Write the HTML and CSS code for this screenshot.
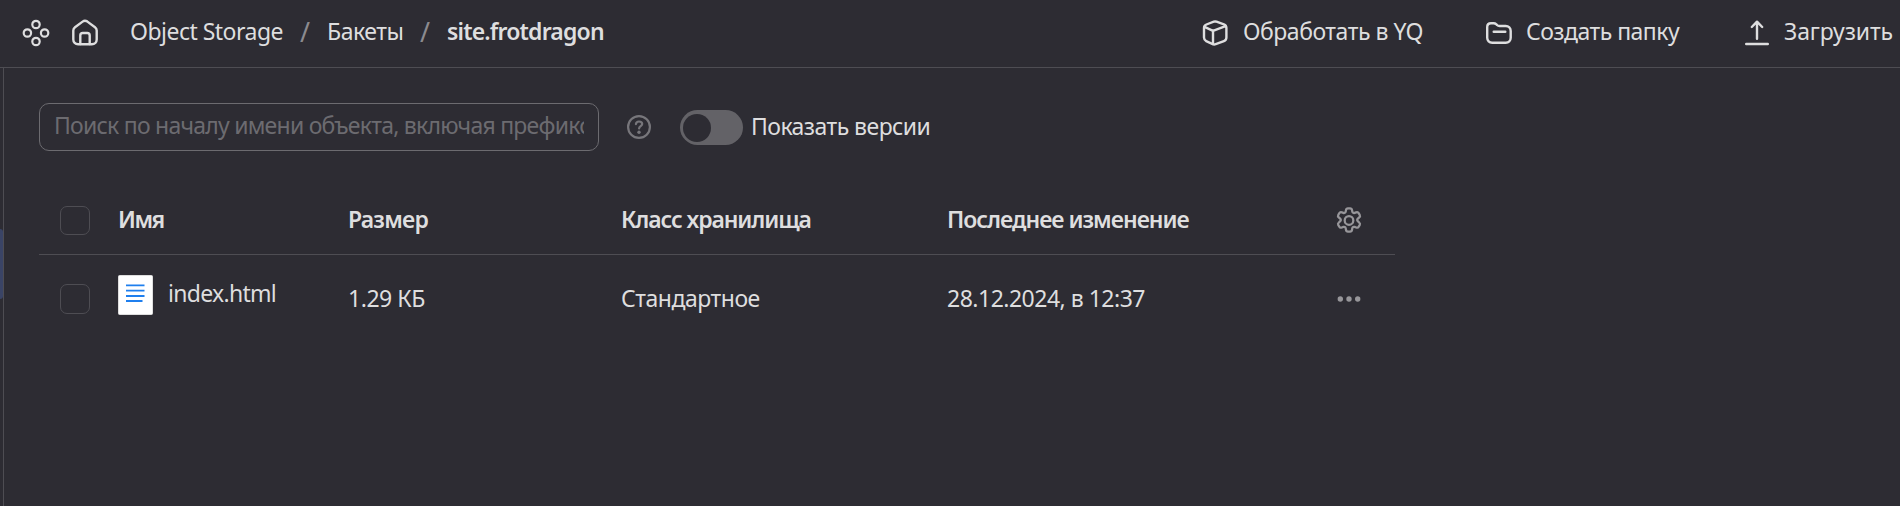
FILE: index.html
```
<!DOCTYPE html>
<html lang="ru">
<head>
<meta charset="utf-8">
<title>Object Storage</title>
<link rel="stylesheet" href="styles.css">
</head>
<body>
<header class="topbar">
  <svg class="icon icon-services" viewBox="0 0 28 28"><circle cx="14" cy="5.5" r="3.7"/><circle cx="5.4" cy="14" r="3.7"/><circle cx="22.6" cy="14" r="3.7"/><circle cx="14" cy="22.5" r="3.7"/></svg>
  <svg class="icon icon-home" viewBox="0 0 28 28"><path d="M2.300 11.600c0-1.400.6-2.600 1.700-3.400l7.600-5.600c1.400-1 3.300-1 4.800 0L24 8.200c1.100.8 1.700 2 1.700 3.400V20.500c0 2.800-2 4.800-4.800 4.800H7.100c-2.800 0-4.800-2-4.800-4.800z"/><path d="M9.300 25V16.500c0-1.500 1-2.500 2.500-2.500h4.400c1.500 0 2.500 1 2.500 2.500V25"/></svg>
  <nav class="crumbs">
    <a class="crumb c-service">Object Storage</a>
    <span class="slash slash-first">/</span>
    <a class="crumb c-buckets">Бакеты</a>
    <span class="slash slash-second">/</span>
    <a class="crumb c-current">site.frotdragon</a>
  </nav>
  <div class="actions">
    <a class="action action-process"><svg class="icon" viewBox="0 0 28 28"><path d="M15.500 2.700l7.400 2.700c1.500.6 2.500 2 2.500 3.600v9.500c0 1.600-1 3-2.500 3.600l-8.200 3.100c-1 .4-2 .4-3 0l-6.500-3.100c-1.400-.7-2.200-2-2.200-3.500V9c0-1.600.9-2.900 2.400-3.500l7.400-2.800c.9-.3 1.800-.3 2.700 0z"/><path d="M3.500 7.800l8.500 4 12.500-4.600M12 11.800V25"/></svg><span>Обработать в YQ</span></a>
    <a class="action action-folder"><svg class="icon" viewBox="0 0 28 28"><path d="M2.200 8c0-2.400 1.400-3.800 3.800-3.800h2.600c1 0 1.800.3 2.500 1l.9.800c.7.700 1.500 1 2.500 1h6.200c2.900 0 5 2.100 5 5v6.700c0 2.900-2.100 5-5 5H7.200c-2.900 0-5-2.100-5-5z"/><path d="M8.700 12.800H20.300"/></svg><span>Создать папку</span></a>
    <a class="action action-upload"><svg class="icon" viewBox="0 0 28 28"><path d="M14 19.800V3M8.800 8L14 2.700l5.200 5.300M3.200 25H24.800"/></svg><span>Загрузить</span></a>
  </div>
</header>
<div class="body">
  <aside class="rail"><div class="rail-active"></div></aside>
  <main class="content">
    <div class="filters">
      <div class="search"><span class="placeholder">Поиск по началу имени объекта, включая префикс</span></div>
      <svg class="help" viewBox="0 0 24 24"><circle cx="12" cy="12" r="10.900"/><path d="M8.900 9.200C9.100 7.500 10.300 6.500 12 6.500s3.200 1 3.200 2.600c0 2-3.100 2.300-3.100 4.400"/><circle class="dot" cx="12" cy="17.300" r="1.700"/></svg>
      <div class="toggle"><div class="knob"></div></div>
      <span class="versions">Показать версии</span>
    </div>
    <div class="table">
      <div class="row head">
        <div class="check"></div>
        <span class="h-name">Имя</span><span class="h-size">Размер</span><span class="h-class">Класс хранилища</span><span class="h-date">Последнее изменение</span>
        <svg class="tool" viewBox="1 1 26 26"><path d="M11.200 3.900C11.400 2.600 12 2.200 13 2.200h2c1 0 1.600.4 1.800 1.700l.3 1.500c.2.900 1.200 1.400 2.100 1.100l1.400-.5c1.200-.4 1.900-.2 2.400.7l1 1.700c.5.900.3 1.600-.7 2.400l-1.100 1c-.8.700-.8 1.800 0 2.400l1.100 1c1 .8 1.200 1.500.7 2.400l-1 1.700c-.5.900-1.200 1.100-2.400.7l-1.400-.5c-.9-.3-1.900.2-2.100 1.100l-.3 1.500c-.2 1.300-.8 1.700-1.800 1.700h-2c-1 0-1.600-.4-1.800-1.700l-.3-1.500c-.2-.9-1.200-1.400-2.100-1.100l-1.400.5c-1.200.4-1.900.2-2.400-.7l-1-1.700c-.5-.9-.3-1.600.7-2.400l1.100-1c.8-.6.8-1.700 0-2.400l-1.100-1c-1-.8-1.200-1.500-.7-2.400l1-1.700c.5-.9 1.200-1.100 2.400-.7l1.400.5c.9.300 1.900-.2 2.100-1.100z"/><circle cx="14" cy="13.500" r="4"/></svg>
      </div>
      <div class="row item">
        <div class="check"></div>
        <div class="file"><svg class="doc" viewBox="0 0 35 40"><rect class="sheet" x=".5" y=".5" width="34" height="39" rx="1"/><path d="M8 10.300H26.500M8 15.700H26.500M8 21H26.500M8 26H24.500"/></svg><span class="v-name">index.html</span></div>
        <span class="v-size">1.29 КБ</span><span class="v-class">Стандартное</span><span class="v-date">28.12.2024, в 12:37</span>
        <svg class="tool dots" viewBox="0 0 28 28"><circle cx="5.300" cy="14" r="2.700"/><circle cx="14" cy="14" r="2.700"/><circle cx="22.700" cy="14" r="2.700"/></svg>
      </div>
    </div>
  </main>
</div>
</body>
</html>
```
FILE: styles.css
```
* { box-sizing: border-box; }
body { margin: 0; height: 506px; overflow: hidden; background: #2d2c33; color: #dededf; font: 23px/32px "Noto Sans", sans-serif; letter-spacing: -0.47px; white-space: nowrap; display: flex; flex-direction: column; }

.topbar { height: 68px; flex: none; display: flex; align-items: center; padding: 0 0 1px 22px; border-bottom: 1px solid #4e4d53; }
.icon { width: 28px; height: 28px; flex: none; fill: none; stroke: #dededf; stroke-width: 2.4; stroke-linecap: round; stroke-linejoin: round; }
.icon-services { stroke-width: 2.2; }
.icon-home { margin-left: 21px; }
.crumbs { display: flex; margin-left: 31px; padding-bottom: 4px; }
.c-service { width: 170px; letter-spacing: -0.52px; }
.slash { color: #8b8a8f; font-size: 27px; padding-top: 1px; height: 32px; }
.slash-first { width: 27px; }
.c-buckets { width: 93px; }
.slash-second { width: 27px; }
.c-current { font-weight: 600; letter-spacing: -0.83px; }
.actions { display: flex; margin-left: auto; }
.action { display: flex; align-items: center; }
.action span { padding-bottom: 4px; }
.action .icon { margin-right: 13px; }
.action-process { width: 284px; }
.action-process .icon { margin-right: 14px; }
.action-folder { width: 258px; letter-spacing: -0.52px; }
.action-upload { width: 157px; letter-spacing: -0.1px; }

.body { flex: 1; display: flex; }
.rail { width: 4px; flex: none; border-right: 1px solid #4e4d53; padding-top: 161px; }
.rail-active { height: 70px; background: #3a4466; border-radius: 0 3px 3px 0; }
.content { padding: 35px 0 0 35px; }

.filters { display: flex; align-items: center; height: 48px; }
.search { width: 560px; height: 48px; border: 1px solid #6c6b70; border-radius: 10px; padding: 6px 14px; }
.placeholder { display: block; height: 34px; line-height: 30px; overflow: hidden; color: #6c6b70; letter-spacing: -0.76px; }
.help { width: 24px; height: 24px; margin-left: 28px; fill: none; stroke: #77767b; stroke-width: 2.2; stroke-linecap: round; }
.help .dot { fill: #77767b; stroke: none; }
.toggle { width: 63px; height: 35px; border-radius: 18px; background: #636267; margin-left: 29px; padding: 4px 3px; }
.knob { width: 28px; height: 28px; border-radius: 50%; background: #2d2c33; }
.versions { margin-left: 8px; padding-bottom: 2px; letter-spacing: -0.55px; }

.table { width: 1356px; margin-top: 35px; }
.row { display: grid; grid-template-columns: 58px 230px 273px 326px 388px 28px; align-items: center; padding-left: 21px; }
.row > span { padding-bottom: 2px; }
.head { height: 69px; font-weight: 600; border-bottom: 1px solid #4e4d53; }
.head .check { height: 29px; margin-top: 1px; }
.head .tool { margin-top: 2px; stroke-width: 2.1; }
.h-name { letter-spacing: -1.5px; }
.h-date { letter-spacing: -1px; }
.h-size { letter-spacing: -0.8px; }
.h-class { letter-spacing: -1.08px; }
.item { height: 88px; }
.check { width: 30px; height: 30px; border: 1px solid #4e4d53; border-radius: 7px; }
.tool { width: 28px; height: 28px; fill: none; stroke: #97969a; stroke-width: 2.3; }
.dots { fill: #97969a; stroke: none; }
.file { display: flex; align-items: center; gap: 15px; margin-bottom: 8px; }
.v-name { padding-bottom: 4px; letter-spacing: -0.7px; }
.v-date { letter-spacing: -0.5px; }
.doc { width: 35px; height: 40px; stroke: #1f7fee; stroke-width: 1.8; }
.sheet { fill: #fff; stroke: #dedede; stroke-width: 1; }
```
